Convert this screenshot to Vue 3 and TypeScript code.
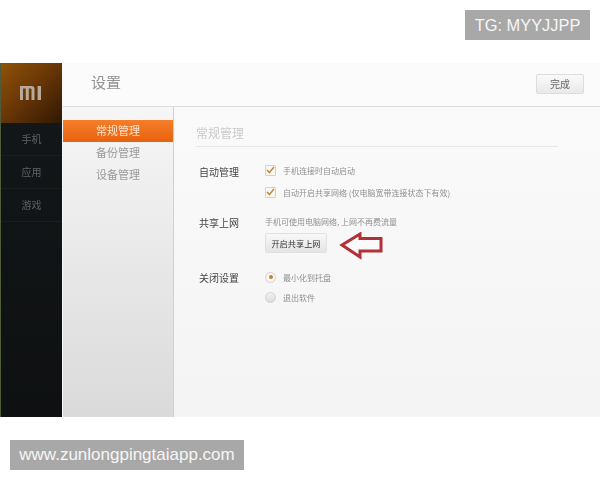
<script setup lang="ts">
const navItems: string[] = ['手机', '应用', '游戏']
const menuItems: string[] = ['常规管理', '备份管理', '设备管理']
</script>

<template>
  <div class="page">
    <div class="top-row">
      <div class="tag tg">TG: MYYJJPP</div>
    </div>
    <div class="shot">
      <aside class="rail">
        <div class="logo-box">
          <svg width="22" height="14" viewBox="0 0 22 14" class="logo">
            <path d="M0 0h11.5a3 3 0 0 1 3 3V14h-3V3.2a.6.6 0 0 0-.6-.6H8.8V14H5.8V2.6H3V14H0z" fill="#b8aa9a" />
            <rect x="17.6" y="0" width="3.4" height="14" fill="#b8aa9a" />
          </svg>
        </div>
        <div v-for="n in navItems" :key="n" class="rail-item">{{ n }}</div>
        <div class="rail-rest"></div>
      </aside>
      <div class="main">
        <header class="head">
          <span class="head-title">设置</span>
          <button class="done">完成</button>
        </header>
        <div class="body">
          <nav class="menu">
            <div
              v-for="(m, i) in menuItems"
              :key="m"
              class="menu-item"
              :class="{ active: i === 0 }"
            >{{ m }}</div>
          </nav>
          <section class="content">
            <h2 class="section-title">常规管理</h2>
            <div class="row auto">
              <div class="label">自动管理</div>
              <div class="col">
                <div class="opt"><span class="check"><svg width="9" height="8" viewBox="0 0 9 8"><path d="M1 4l2.4 2.6L8 1" fill="none" stroke="#c08a3c" stroke-width="1.5" /></svg></span>手机连接时自动启动</div>
                <div class="opt"><span class="check"><svg width="9" height="8" viewBox="0 0 9 8"><path d="M1 4l2.4 2.6L8 1" fill="none" stroke="#c08a3c" stroke-width="1.5" /></svg></span>自动开启共享网络 (仅电脑宽带连接状态下有效)</div>
              </div>
            </div>
            <div class="row share">
              <div class="label">共享上网</div>
              <div class="col">
                <div class="hint">手机可使用电脑网络, 上网不再费流量</div>
                <div class="action">
                  <button class="share-btn">开启共享上网</button>
                  <svg width="46" height="28" viewBox="0 0 46 28" class="arrow">
                    <path d="M4 13 L22 2 V6.5 H43 V19 H22 V25 Z" fill="#fafafa" stroke="#b23038" stroke-width="3" stroke-linejoin="miter" />
                  </svg>
                </div>
              </div>
            </div>
            <div class="row close">
              <div class="label">关闭设置</div>
              <div class="col radios">
                <div class="opt radio-opt"><span class="radio on"></span>最小化到托盘</div>
                <div class="opt radio-opt"><span class="radio"></span>退出软件</div>
              </div>
            </div>
          </section>
        </div>
      </div>
    </div>
    <div class="bottom-row">
      <div class="tag url">www.zunlongpingtaiapp.com</div>
    </div>
  </div>
</template>

<style scoped>
.page {
  width: 600px;
  height: 480px;
  overflow: hidden;
  background: #fff;
  font-family: "Noto Sans CJK SC", "Liberation Sans", sans-serif;
  display: flex;
  flex-direction: column;
}
.top-row {
  display: flex;
  justify-content: flex-end;
  padding: 10px 10px 23px;
}
.tag {
  height: 30px;
  line-height: 30px;
  background: #a8a8a8;
  color: #f6f6f6;
  font-family: "Liberation Sans", Arial, sans-serif;
  font-size: 16.4px;
  text-align: center;
}
.tg { width: 125px; }
.url { width: 234px; font-size: 17px; }
.bottom-row {
  padding: 23px 10px 10px;
  display: flex;
}
.shot {
  height: 354px;
  display: flex;
  background: #f7f7f7;
  filter: blur(0.35px);
}
.rail {
  width: 62px;
  flex: none;
  display: flex;
  flex-direction: column;
  background: linear-gradient(#14181a, #0e1011);
  border-left: 1px solid #4f5c3c;
  box-sizing: border-box;
  margin-right: 1px;
}
.logo-box {
  height: 60px;
  display: flex;
  align-items: center;
  justify-content: center;
  background: linear-gradient(135deg, #8f5208 0%, #6b3806 45%, #2f1804 100%);
}
.logo { margin-top: 0; margin-left: -2px; }
.rail-item {
  height: 33px;
  line-height: 31px;
  text-align: center;
  font-size: 10px;
  color: #5f6163;
  border-bottom: 1px solid #1b1e20;
  box-sizing: border-box;
}
.rail-rest { flex: 1; }
.main {
  flex: 1;
  display: flex;
  flex-direction: column;
  min-width: 0;
}
.head {
  height: 44px;
  flex: none;
  box-sizing: border-box;
  display: flex;
  align-items: center;
  justify-content: space-between;
  padding: 0 16px 2px 28px;
  background: #fbfbfb;
  border-bottom: 1px solid #dcdcdc;
}
.head-title {
  font-size: 15px;
  color: #939393;
  margin-bottom: 4px;
}
.done {
  width: 48px;
  height: 20px;
  padding: 0;
  font: inherit;
  font-size: 10px;
  color: #666;
  border: 1px solid #dddddd;
  border-radius: 2px;
  background: linear-gradient(#fafafa, #e9e9e9);
}
.body {
  flex: 1;
  display: flex;
  min-height: 0;
}
.menu {
  width: 111px;
  flex: none;
  box-sizing: border-box;
  padding-top: 13px;
  background: linear-gradient(#f6f6f6, #dadada);
  border-right: 1px solid #cfcfcf;
}
.menu-item {
  height: 22px;
  line-height: 21px;
  padding-left: 33px;
  font-size: 11px;
  color: #9a9a9a;
}
.menu-item.active {
  background: linear-gradient(#f57e2a, #e8620f);
  color: #fde4cf;
}
.content {
  flex: 1;
  padding: 16px 42px 0 22px;
  background: linear-gradient(#fafafa, #f4f4f4);
}
.section-title {
  margin: 0;
  height: 23px;
  line-height: 19px;
  font-size: 12px;
  font-weight: 400;
  color: #cacaca;
  border-bottom: 1px solid #e8e8e8;
}
.row {
  display: flex;
  padding-left: 3px;
}
.auto { margin-top: 16px; }
.share { margin-top: 11px; }
.close { margin-top: 9px; }
.label {
  width: 66px;
  flex: none;
  font-size: 10px;
  line-height: 18px;
  color: #444;
}
.col {
  display: flex;
  flex-direction: column;
}
.opt {
  display: flex;
  align-items: center;
  gap: 7px;
  height: 22px;
  font-size: 8px;
  color: #8f8f8f;
  white-space: nowrap;
}
.radio-opt { height: 20px; }
.auto .col { margin-top: -4px; }
.radios { margin-top: -2px; }
.check {
  width: 11px;
  height: 11px;
  box-sizing: border-box;
  border: 1px solid #d6d0c6;
  background: #faf7f0;
  border-radius: 1px;
  display: flex;
  align-items: center;
  justify-content: center;
}
.radio {
  width: 11px;
  height: 11px;
  box-sizing: border-box;
  border-radius: 50%;
  border: 1px solid #d2d2d2;
  background: linear-gradient(#f2f2f2, #dcdcdc);
  position: relative;
}
.radio.on {
  background: #faf6ee;
}
.radio.on::after {
  content: "";
  position: absolute;
  left: 2.5px;
  top: 2.5px;
  width: 4px;
  height: 4px;
  border-radius: 50%;
  background: #b9823f;
}
.hint {
  font-size: 8px;
  line-height: 16px;
  color: #8f8f8f;
  white-space: nowrap;
}
.action {
  display: flex;
  align-items: flex-start;
  gap: 11px;
  margin-top: 3px;
}
.share-btn {
  width: 62px;
  height: 20px;
  padding: 0;
  font: inherit;
  font-size: 8.2px;
  color: #333;
  border: 1px solid #e0e0e0;
  border-radius: 2px;
  background: linear-gradient(#f8f8f8, #e4e4e4);
}
.arrow { margin-top: -1px; }
</style>

<style>
html, body { margin: 0; background: #fff; }
</style>
